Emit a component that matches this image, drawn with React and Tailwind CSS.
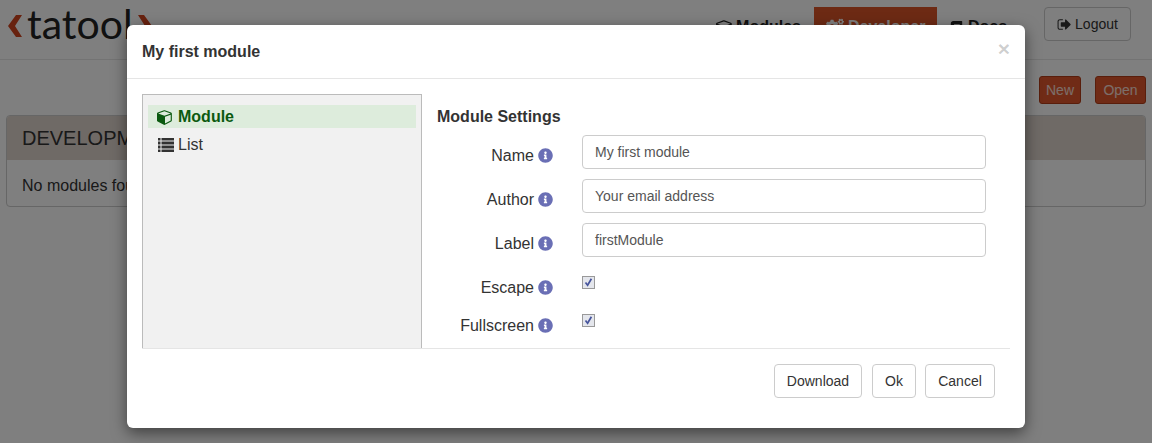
import { FaInfoCircle, FaCogs, FaBook } from 'react-icons/fa';

const fields = [
  { label: "Name", value: "My first module" },
  { label: "Author", value: "Your email address" },
  { label: "Label", value: "firstModule" },
];

function CubeIcon({ className }) {
  return (
    <svg viewBox="0 0 1792 1792" className={className} fill="currentColor">
      <path fillRule="evenodd" d="M896 1629l640-349v-636l-640 233v752zm-64-865l698-254-698-254-698 254zm832-252v768q0 35-18 65t-50 47l-704 384q-28 16-61 16t-61-16l-704-384q-32-17-50-47t-18-65v-768q0-40 23-73t61-47l704-256q22-8 44-8t44 8l704 256q38 14 61 47t23 73z" />
    </svg>
  );
}

function ListIcon({ className }) {
  return (
    <svg viewBox="0 0 16 14" className={className} fill="currentColor">
      {[0, 4, 8, 12].map((y) => (
        <g key={y}>
          <rect x="0" y={y - 0.5} width="2.5" height="3" />
          <rect x="3.5" y={y - 0.5} width="12.5" height="3" />
        </g>
      ))}
    </svg>
  );
}

function LogoutIcon({ className }) {
  return (
    <svg viewBox="0 0 1792 1792" className={className} fill="currentColor">
      <path d="M704 1440q0 4 1 20t.5 26.5-3 23.5-10 19.5-20.5 6.5h-320q-119 0-203.5-84.5t-84.5-203.5v-704q0-119 84.5-203.5t203.5-84.5h320q13 0 22.5 9.5t9.5 22.5q0 4 1 20t.5 26.5-3 23.5-10 19.5-20.5 6.5h-320q-66 0-113 47t-47 113v704q0 66 47 113t113 47h312l11.5 1 11.5 3 8 5.5 7 9 2 13.5zm928-544q0 26-19 45l-544 544q-19 19-45 19t-45-19-19-45v-288h-448q-26 0-45-19t-19-45v-384q0-26 19-45t45-19h448v-288q0-26 19-45t45-19 45 19l544 544q19 19 19 45z" />
    </svg>
  );
}

function FieldLabel({ label }) {
  return (
    <div className="w-[116px] flex items-center justify-end gap-[4px] text-[16px] text-[#333]">
      <span>{label}</span>
      <FaInfoCircle className="w-[15px] h-[15px] text-[#6a6fb5]" />
    </div>
  );
}

function Check() {
  return (
    <span className="w-[13px] h-[13px] border border-[#999] bg-[#e4e6ec] flex items-center justify-center">
      <svg viewBox="0 0 11 11" className="w-[11px] h-[11px]">
        <path d="M2.5 5.5 L4.6 8.2 L8.4 1.8" fill="none" stroke="#46549c" strokeWidth="1.7" />
      </svg>
    </span>
  );
}

function Btn({ children, className }) {
  return (
    <button className={`h-[34px] border border-[#ccc] rounded-[4px] bg-white text-[14px] text-[#333] ${className}`}>
      {children}
    </button>
  );
}

export default function App() {
  return (
    <div className="relative h-[443px] w-[1152px] overflow-hidden bg-white font-['Liberation_Sans',sans-serif] text-[#333]">
      {/* page behind the dialog */}
      <div className="h-[60px] border-b border-[#e7e7e7] flex items-start">
        <div className="flex items-center pl-[8px] h-[50px]">
          <svg viewBox="0 0 14 22" className="w-[14px] h-[22px] mt-[1px]">
            <path d="M14 0 L7 11 L14 22 L8 22 L0 11 L8 0 Z" fill="#d0451f" />
          </svg>
          <span className="font-['Lato',sans-serif] text-[41px] leading-none text-[#222] mb-[4px] ml-[5px] mr-[5px]">tatool</span>
          <svg viewBox="0 0 14 22" className="w-[14px] h-[22px] mt-[1px]">
            <path d="M0 0 L7 11 L0 22 L6 22 L14 11 L6 0 Z" fill="#d0451f" />
          </svg>
        </div>
        <div className="ml-auto flex items-start pr-[21px]">
          <div className="flex items-center gap-[3px] pt-[15px] pr-[13px] font-bold text-[16px] text-[#222]">
            <CubeIcon className="w-[17px] h-[17px]" />
            <span>Modules</span>
          </div>
          <div className="mt-[7px] h-[52px] w-[123px] bg-[#da5529] flex items-start pt-[8px] pl-[12px] gap-[4px] font-bold text-[16px] text-white">
            <FaCogs className="w-[18px] h-[18px] mt-[2px]" />
            <span>Developer</span>
          </div>
          <div className="flex items-center gap-[5px] pt-[15px] pl-[13px] w-[107px] font-bold text-[16px] text-[#222]">
            <FaBook className="w-[13px] h-[13px]" />
            <span>Docs</span>
          </div>
          <div className="mt-[7px] h-[34px] w-[87px] border border-[#ccc] rounded-[4px] flex items-center justify-center gap-[3px] text-[14px]">
            <LogoutIcon className="w-[15px] h-[15px]" />
            <span>Logout</span>
          </div>
        </div>
      </div>
      <div className="flex justify-end gap-[14px] pr-[6px] pt-[16px]">
        <div className="h-[28px] w-[42px] bg-[#e0572c] border border-[#b23d18] rounded-[3px] flex items-center justify-center text-[14px] text-white/80">New</div>
        <div className="h-[28px] w-[51px] bg-[#e0572c] border border-[#b23d18] rounded-[3px] flex items-center justify-center text-[14px] text-white/80">Open</div>
      </div>
      <div className="mx-[6px] mt-[11px] h-[92px] border border-[#ccc] rounded-[4px] overflow-hidden">
        <div className="h-[44px] bg-[#ded4cd] flex items-center pl-[15px] text-[20px]">DEVELOPMENT MODULES</div>
        <div className="pl-[15px] pt-[14px] text-[16px]">No modules found</div>
      </div>

      {/* backdrop and dialog */}
      <div className="absolute inset-0 bg-black/50 pt-[25px]">
        <div className="mx-auto w-[898px] h-[403px] bg-white rounded-[6px] shadow-[0_5px_15px_rgba(0,0,0,0.5)] flex flex-col">
          <div className="h-[54px] border-b border-[#e5e5e5] flex items-center justify-between pl-[15px] pr-[15px]">
            <span className="text-[16px] font-bold">My first module</span>
            <span className="text-[21px] font-bold leading-none text-black/20 mb-[6px]">×</span>
          </div>
          <div className="mx-[15px] mt-[15px] h-[255px] border-b border-[#e5e5e5] flex">
            <div className="w-[280px] border-t border-l border-r border-[#bbb] bg-[#f1f1f1] pt-[10px] px-[5px]">
              <div className="h-[23px] bg-[#ddecdc] flex items-center pl-[9px] gap-[5px] text-[16px] font-bold text-[#0b5a10]">
                <CubeIcon className="w-[16px] h-[16px]" />
                <span>Module</span>
              </div>
              <div className="mt-[5px] h-[23px] flex items-center pl-[10px] gap-[4px] text-[16px]">
                <ListIcon className="w-[16px] h-[14px]" />
                <span>List</span>
              </div>
            </div>
            <div className="flex-1 pl-[15px] pt-[14px]">
              <div className="text-[16px] font-bold leading-[18px]">Module Settings</div>
              <div className="mt-[9px] flex flex-col gap-[10px]">
                {fields.map((f) => (
                  <div key={f.label} className="flex h-[34px]">
                    <div className="pt-[7px] flex"><FieldLabel label={f.label} /></div>
                    <div className="ml-[29px] w-[404px] h-[34px] border border-[#ccc] rounded-[4px] flex items-center pl-[12px] text-[14px] text-[#555]">
                      {f.value}
                    </div>
                  </div>
                ))}
              </div>
              <div className="mt-[19px] flex flex-col gap-[19px]">
                {["Escape", "Fullscreen"].map((label) => (
                  <div key={label} className="flex h-[19px]">
                    <div className="pt-[4px] flex"><FieldLabel label={label} /></div>
                    <div className="ml-[29px]"><Check /></div>
                  </div>
                ))}
              </div>
            </div>
          </div>
          <div className="flex justify-end pr-[30px] pt-[15px]">
            <Btn className="w-[88px]">Download</Btn>
            <Btn className="w-[44px] ml-[10px]">Ok</Btn>
            <Btn className="w-[70px] ml-[9px]">Cancel</Btn>
          </div>
        </div>
      </div>
    </div>
  );
}
